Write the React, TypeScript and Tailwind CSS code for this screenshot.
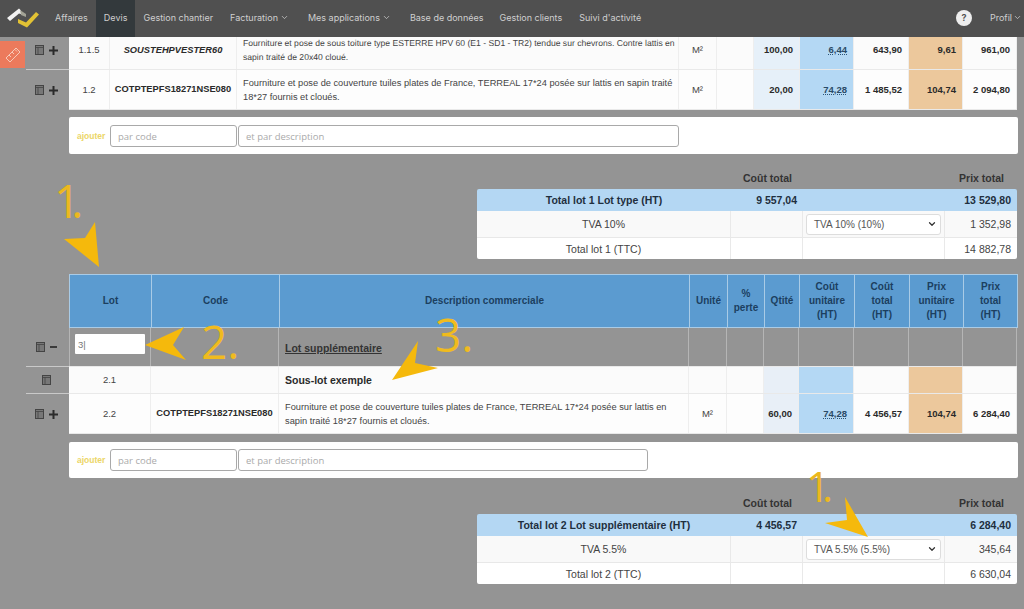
import { ChevronDown } from 'lucide-react';

type Cell = { text?: string; bold?: boolean; italic?: boolean; align?: string; money?: boolean; wrap?: boolean; code?: boolean; small?: boolean };

const cols1 = ['w-[41px]', 'w-[127px]', 'w-[442px]', 'w-[38px]', 'w-[37px]', 'w-[46px] bg-[#e6f0f9]', 'w-[54px] bg-[#b4d8f4]', 'w-[55px]', 'w-[54px] bg-[#ecc89c]', 'w-[54px]'];
const cols2 = ['w-[82px]', 'w-[128px]', 'w-[410px]', 'w-[38px]', 'w-[37px]', 'w-[35px] bg-[#e8eff7]', 'w-[55px] bg-[#b4d8f4]', 'w-[55px]', 'w-[54px] bg-[#ecc89c]', 'w-[54px]'];
const colsHead = ['w-[82px]', 'w-[128px]', 'w-[410px]', 'w-[38px]', 'w-[37px]', 'w-[35px]', 'w-[55px]', 'w-[55px]', 'w-[54px]', 'w-[54px]'];

const navItems = [
  { label: 'Affaires' },
  { label: 'Devis', active: true },
  { label: 'Gestion chantier', extra: 'mr-[1px]' },
  { label: 'Facturation', menu: true },
  { label: 'Mes applications', menu: true },
  { label: 'Base de données' },
  { label: 'Gestion clients', extra: 'mr-[1px]' },
  { label: "Suivi d'activité" },
];

const heads = ['Lot', 'Code', 'Description commerciale', 'Unité', '% perte', 'Qtité', 'Coût unitaire (HT)', 'Coût total (HT)', 'Prix unitaire (HT)', 'Prix total (HT)'];

function Logo() {
  return (
    <svg width="33" height="22" viewBox="0 0 33 22" className="shrink-0">
      <path d="M0 10 L12 0.5 L14 2.5 L14 6 L12 5.5 L3 13 Z" fill="#f2f2f2" />
      <path d="M13 2 L19 6 L19 9 L14 7 Z" fill="#a3a396" />
      <path d="M11 11 L19 14.5 L29 4 L32 6.5 L20 19.5 L11 15 Z" fill="#e2c234" />
    </svg>
  );
}

function BookIcon() {
  return (
    <svg width="9" height="10" viewBox="0 0 9 10" className="shrink-0">
      <rect x="0.5" y="0.5" width="8" height="9" fill="#777" stroke="#444" strokeWidth="1" />
      <path d="M0.5 2.5 H8.5 M3 2.5 V9.5" stroke="#444" strokeWidth="0.8" />
    </svg>
  );
}

function Gutter({ sign, line }: { sign?: '+' | '-'; line?: boolean }) {
  return (
    <div className="w-[69px] shrink-0 flex items-stretch">
      <div className="w-[26px] shrink-0" />
      <div className={`flex-1 flex items-center justify-center gap-[5px] pr-[2px] ${line ? 'border-b border-[#c9c9c9]' : ''}`}>
        <BookIcon />
        {sign === '+' && (
          <svg width="9" height="9" viewBox="0 0 9 9">
            <path d="M4.5 0 V9 M0 4.5 H9" stroke="#2b2b2b" strokeWidth="2" />
          </svg>
        )}
        {sign === '-' && <div className="w-[7px] h-[2px] bg-[#3a3a3a]" />}
      </div>
    </div>
  );
}

function BodyRow({ cols, cells, height, bg, line, sign }: { cols: string[]; cells: Cell[]; height: string; bg: string; line?: boolean; sign?: '+' | '-' }) {
  return (
    <div className={`flex ${height}`}>
      <Gutter sign={sign} line={line} />
      <div className={`flex border-b border-[#e9e9e9] ${bg}`}>
        {cols.map((col, i) => {
          const c = cells[i] ?? {};
          const size = c.small ? 'text-[8.6px] [text-rendering:geometricPrecision]' : c.code ? 'text-[9.3px]' : c.wrap ? 'text-[9.25px]' : 'text-[9.5px]';
          return (
            <div
              key={i}
              className={`${col} shrink-0 border-r border-[#eeeeee] flex items-center overflow-hidden ${c.align ?? 'justify-center'} ${c.wrap ? 'pl-[6px] leading-[14px]' : 'pt-[1px]'} ${size} ${c.bold ? 'font-bold text-[#2a2a2a]' : 'text-[#444]'} ${c.italic ? 'italic' : ''}`}
            >
              {c.money ? <span className="pr-[6px] underline decoration-dotted decoration-[#2a5578] text-[#2a4a66]">{c.text}</span> : <span className={c.align === 'justify-end' ? 'pr-[6px]' : ''}>{c.text}</span>}
            </div>
          );
        })}
      </div>
    </div>
  );
}

function AddBar({ descWidth, height }: { descWidth: string; height: string }) {
  return (
    <div className={`ml-[69px] w-[949px] ${height} bg-white rounded-[2px] flex items-center pl-[8px]`}>
      <span className="w-[33px] pt-[1px] text-[8.5px] font-bold text-[#ecd667]">ajouter</span>
      <input readOnly placeholder="par code" className="w-[127px] h-[22px] border border-[#a9a9a9] rounded-[3px] px-[7px] pt-[1px] text-[9.5px] placeholder:text-[#aaa] font-['Open_Sans',sans-serif]" />
      <input readOnly placeholder="et par description" className={`${descWidth} ml-[1px] h-[22px] border border-[#a9a9a9] rounded-[3px] px-[7px] pt-[1px] text-[9.5px] placeholder:text-[#aaa] font-['Open_Sans',sans-serif]`} />
    </div>
  );
}

function Totals({ title, cost, price, vat, vatOption, vatAmount, ttcLabel, ttc }: { title: string; cost: string; price: string; vat: string; vatOption: string; vatAmount: string; ttcLabel: string; ttc: string }) {
  return (
    <div className="ml-[477px] w-[540px]">
      <div className="flex h-[17px] items-center pb-[3px] text-[10.5px] font-bold text-[#333]">
        <span className="w-[315px] text-right">Coût total</span>
        <span className="w-[212px] text-right">Prix total</span>
      </div>
      <div className="rounded-[2px] overflow-hidden text-[10.5px]">
        <div className="flex h-[22px] items-center pt-[1px] bg-[#b4d7f3] font-bold text-[#1f2f3e]">
          <span className="w-[254px] text-center whitespace-nowrap">{title}</span>
          <span className="w-[66px] text-right whitespace-nowrap">{cost}</span>
          <span className="flex-1 text-right pr-[6px]">{price}</span>
        </div>
        <div className="flex h-[27px] bg-[#f9f9f9] border-b border-[#e8e8e8] text-[#444]">
          <div className="w-[254px] pt-[1px] flex items-center justify-center border-r border-[#e9e9e9]">{vat}</div>
          <div className="w-[72px] border-r border-[#e9e9e9]" />
          <div className="w-[142px] border-r border-[#e9e9e9] flex items-center pl-[3px] pr-[3px]">
            <div className="w-full h-[21px] bg-white border border-[#ddd] rounded-[3px] flex items-center justify-between pl-[7px] pr-[3px] text-[10px] text-[#555]">
              {vatOption}
              <ChevronDown size={10} strokeWidth={3} className="text-[#333]" />
            </div>
          </div>
          <div className="flex-1 pt-[1px] flex items-center justify-end pr-[6px]">{vatAmount}</div>
        </div>
        <div className="flex h-[21px] bg-white text-[#444]">
          <div className="w-[254px] pt-[2px] flex items-center justify-center border-r border-[#e9e9e9]">{ttcLabel}</div>
          <div className="w-[72px] border-r border-[#e9e9e9]" />
          <div className="w-[142px] border-r border-[#e9e9e9]" />
          <div className="flex-1 pt-[2px] flex items-center justify-end pr-[6px]">{ttc}</div>
        </div>
      </div>
    </div>
  );
}

export default function App() {
  return (
    <div className="relative w-[1024px] h-[609px] overflow-hidden bg-[#949494] font-['Liberation_Sans',Arial,sans-serif]">
      {/* Top nav */}
      <nav className="relative z-10 h-[37px] bg-[#505050] flex items-stretch font-['Inter',sans-serif] text-[9px] text-[#cfcfcf]">
        <div className="w-[47px] pl-[7px] flex items-center">
          <Logo />
        </div>
        {navItems.map((item) => (
          <div key={item.label} className={`flex items-center px-[8px] pb-[2px] gap-[2px] whitespace-nowrap ${item.active ? 'bg-[#33393c]' : ''} ${item.extra ?? ''}`}>
            {item.label}
            {item.menu && <ChevronDown size={9} strokeWidth={2} className="mr-[3px]" />}
          </div>
        ))}
        <div className="ml-auto flex items-center pb-[2px] pr-[2px]">
          <div className="w-[16px] h-[16px] rounded-full bg-[#eeeeee] flex items-center justify-center text-[9px] font-bold text-[#555]">?</div>
          <span className="ml-[18px]">Profil</span>
          <ChevronDown size={9} strokeWidth={2} className="ml-[1px]" />
        </div>
      </nav>

      {/* Lot 1 rows: the first one runs under the nav */}
      <div className="mt-[-6px]">
        <BodyRow
          cols={cols1}
          height="h-[39px]"
          bg="bg-[#fbfbfb]"
          line
          sign="+"
          cells={[
            { text: '1.1.5' },
            { text: 'SOUSTEHPVESTER60', bold: true, italic: true, code: true },
            { text: 'Fourniture et pose de sous toiture type ESTERRE HPV 60 (E1 - SD1 - TR2) tendue sur chevrons. Contre lattis en sapin traité de 20x40 cloué.', wrap: true, small: true, align: 'justify-start' },
            { text: 'M²' },
            {},
            { text: '100,00', bold: true, align: 'justify-end' },
            { text: '6,44', bold: true, align: 'justify-end', money: true },
            { text: '643,90', bold: true, align: 'justify-end' },
            { text: '9,61', bold: true, align: 'justify-end' },
            { text: '961,00', bold: true, align: 'justify-end' },
          ]}
        />
      </div>
      <BodyRow
        cols={cols1}
        height="h-[40px]"
        bg="bg-[#fdfdfd]"
        sign="+"
        cells={[
          { text: '1.2' },
          { text: 'COTPTEPFS18271NSE080', bold: true, code: true },
          { text: 'Fourniture et pose de couverture tuiles plates de France, TERREAL 17*24 posée sur lattis en sapin traité 18*27 fournis et cloués.', wrap: true, align: 'justify-start' },
          { text: 'M²' },
          {},
          { text: '20,00', bold: true, align: 'justify-end' },
          { text: '74,28', bold: true, align: 'justify-end', money: true },
          { text: '1 485,52', bold: true, align: 'justify-end' },
          { text: '104,74', bold: true, align: 'justify-end' },
          { text: '2 094,80', bold: true, align: 'justify-end' },
        ]}
      />

      <div className="mt-[7px]">
        <AddBar descWidth="w-[441px]" height="h-[37px]" />
      </div>

      <div className="mt-[18px]">
        <Totals title="Total lot 1 Lot type (HT)" cost="9 557,04" price="13 529,80" vat="TVA 10%" vatOption="TVA 10% (10%)" vatAmount="1 352,98" ttcLabel="Total lot 1 (TTC)" ttc="14 882,78" />
      </div>

      {/* Lot 2 */}
      <div className="mt-[15px] flex">
        <div className="w-[69px] shrink-0" />
        <div className="flex h-[54px] bg-[#5b9bd0] border border-[#a9cbe6] border-r-0">
          {colsHead.map((col, i) => (
            <div key={i} className={`${col} shrink-0 border-r border-[#a9cbe6] flex items-center justify-center text-center ${i > 5 ? 'px-[7px]' : 'px-[3px]'} text-[10px] leading-[14px] font-bold text-[#1c3f60] ${i === 0 ? 'w-[81px]' : ''}`}>
              {heads[i]}
            </div>
          ))}
        </div>
      </div>
      <div className="flex h-[39px]">
        <Gutter sign="-" line />
        <div className="flex border-b border-[#e9e9e9]">
          {colsHead.map((col, i) => (
            <div key={i} className={`${col} shrink-0 border-r border-[#b5b5b5] ${i === 0 ? 'border-l pl-[5px] pt-[6px] w-[82px]' : ''} ${i === 2 ? 'pl-[6px] flex items-center pt-[4px]' : ''}`}>
              {i === 0 && <input readOnly value="3|" className="block w-[70px] h-[20px] bg-white rounded-[1px] px-[3px] text-[9.5px] text-[#777]" />}
              {i === 2 && <span className="text-[10.5px] font-bold text-[#333] underline">Lot supplémentaire</span>}
            </div>
          ))}
        </div>
      </div>
      <BodyRow
        cols={cols2}
        height="h-[27px]"
        bg="bg-[#fbfbfb]"
        line
        cells={[
          { text: '2.1' },
          {},
          { text: 'Sous-lot exemple', bold: true, align: 'justify-start pl-[6px] text-[10.5px]' },
        ]}
      />
      <BodyRow
        cols={cols2}
        height="h-[40px]"
        bg="bg-[#fdfdfd]"
        sign="+"
        cells={[
          { text: '2.2' },
          { text: 'COTPTEPFS18271NSE080', bold: true, code: true },
          { text: 'Fourniture et pose de couverture tuiles plates de France, TERREAL 17*24 posée sur lattis en sapin traité 18*27 fournis et cloués.', wrap: true, align: 'justify-start' },
          { text: 'M²' },
          {},
          { text: '60,00', bold: true, align: 'justify-end' },
          { text: '74,28', bold: true, align: 'justify-end', money: true },
          { text: '4 456,57', bold: true, align: 'justify-end' },
          { text: '104,74', bold: true, align: 'justify-end' },
          { text: '6 284,40', bold: true, align: 'justify-end' },
        ]}
      />

      <div className="mt-[8px]">
        <AddBar descWidth="w-[410px]" height="h-[36px]" />
      </div>

      <div className="mt-[19px]">
        <Totals title="Total lot 2 Lot supplémentaire (HT)" cost="4 456,57" price="6 284,40" vat="TVA 5.5%" vatOption="TVA 5.5% (5.5%)" vatAmount="345,64" ttcLabel="Total lot 2 (TTC)" ttc="6 630,04" />
      </div>

      {/* Side tab */}
      <div className="absolute z-20 left-0 top-[41px] w-[25px] h-[27px] bg-[#ec7a5c] flex items-center justify-center">
        <svg width="16" height="16" viewBox="0 0 16 16" fill="none" stroke="#f6c9b8" strokeWidth="1">
          <path d="M1 11 L11 1 L15 5 L5 15 Z M4 8 L6 10 M7 5 L9 7 M10 2.5 L12 4.5" />
        </svg>
      </div>

      {/* Annotations */}
      <svg className="absolute inset-0 pointer-events-none" width="1024" height="609" viewBox="0 0 1024 609">
        <g fill="#f5b90c">
          <polygon points="99,267 95,222 85,238 64,239" />
          <polygon points="145,345 184,327 173,345 186,360" />
          <polygon points="392,380 418,341 415,363 438,368" />
          <polygon points="868,537 845,497 847,520 825,523" />
        </g>
      </svg>
      <span className="absolute left-[54px] top-[170px] text-[46px] leading-[60px] font-medium tracking-[-9px] text-[#ecb81e] font-['Open_Sans',sans-serif]">1.</span>
      <span className="absolute left-[201px] top-[311px] text-[46px] leading-[60px] font-medium text-[#f0bb1e] font-['Open_Sans',sans-serif]">2.</span>
      <span className="absolute left-[435px] top-[304px] text-[46px] leading-[60px] font-medium text-[#f0bb1e] font-['Open_Sans',sans-serif]">3.</span>
      <span className="absolute left-[806px] top-[458px] text-[42px] leading-[56px] font-medium tracking-[-8px] text-[#ecb81e] font-['Open_Sans',sans-serif]">1.</span>
    </div>
  );
}
